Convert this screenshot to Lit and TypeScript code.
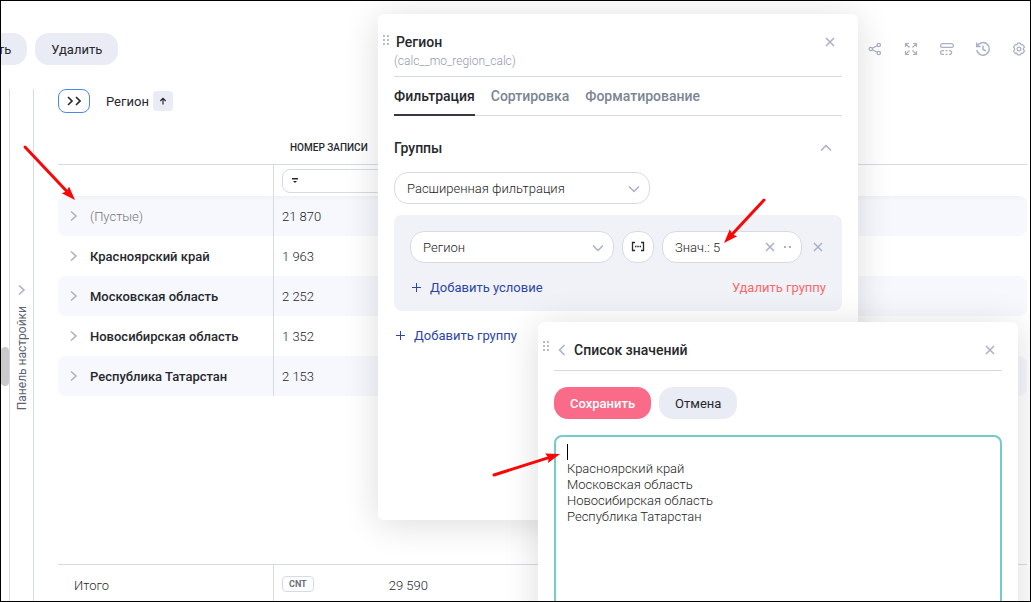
import { LitElement, html, css, svg } from "lit";
import { customElement } from "lit/decorators.js";

const icons = {
  close: html`<svg width="10" height="10" viewBox="0 0 10 10" fill="none" stroke="currentColor" stroke-width="1.5" aria-hidden="true"><path d="M1 1l8 8M9 1l-8 8" /></svg>`,
  right: html`<svg width="8" height="12" viewBox="0 0 8 12" fill="none" stroke="currentColor" stroke-width="1.5" aria-hidden="true"><path d="M1 1.5L6 6l-5 4.5" /></svg>`,
  left: html`<svg width="8" height="12" viewBox="0 0 8 12" fill="none" stroke="currentColor" stroke-width="1.5" aria-hidden="true"><path d="M6.5 1L1.5 6l5 5" /></svg>`,
  down: html`<svg class="caret-down" width="12" height="8" viewBox="0 0 12 8" fill="none" stroke="currentColor" stroke-width="1.5" aria-hidden="true"><path d="M1 1.5l5 5 5-5" /></svg>`,
  up: html`<svg width="12" height="8" viewBox="0 0 12 8" fill="none" stroke="currentColor" stroke-width="1.5" aria-hidden="true"><path d="M1 6.5l5-5 5 5" /></svg>`,
  plus: html`<svg width="10" height="10" viewBox="0 0 10 10" fill="none" stroke="currentColor" aria-hidden="true"><path d="M4.5 0v9M0 4.5h9" /></svg>`,
  grip: html`<svg class="grip" width="8" height="10" viewBox="0 0 8 10" fill="currentColor" aria-hidden="true"><path d="M0 0h2v2H0zM0 4h2v2H0zM0 8h2v2H0zM4 0h2v2H4zM4 4h2v2H4zM4 8h2v2H4z" /></svg>`,
  share: html`<svg width="14" height="14" viewBox="0 0 14 14" fill="none" stroke="currentColor" stroke-width="1.2" aria-hidden="true"><circle cx="2.8" cy="7" r="1.7" /><circle cx="10.8" cy="3" r="1.7" /><circle cx="10.8" cy="11" r="1.7" /><path d="M4.4 6.2l4.8-2.4M4.4 7.8l4.8 2.4" /></svg>`,
  expand: html`<svg width="14" height="14" viewBox="0 0 14 14" fill="none" stroke="currentColor" stroke-width="1.2" aria-hidden="true"><path d="M1.5 5V1.5H5M1.5 1.5l4 4M9 1.5h3.5V5M12.5 1.5l-4 4M1.5 9v3.5H5M1.5 12.5l4-4M9 12.5h3.5V9M12.5 12.5l-4-4" /></svg>`,
  rows: html`<svg width="14" height="14" viewBox="0 0 14 14" fill="none" stroke="currentColor" stroke-width="1.2" aria-hidden="true"><rect x=".6" y="1.6" width="12.8" height="3.8" rx="1.9" /><path d="M4 8.6H2.5a1.9 1.9 0 0 0 0 3.8H4M5.500 8.6h2M5.5 12.4h2M9 8.6h.8a1.9 1.9 0 0 1 0 3.8H9" /></svg>`,
  history: html`<svg width="16" height="16" viewBox="0 0 16 16" fill="none" stroke="currentColor" stroke-width="1.5" aria-hidden="true"><path d="M2.300 5.200A6.300 6.300 0 1 1 1.800 9M1.700 1.500v4h4M8 4.500V8.500l2.800 1.300" /></svg>`,
  gear: html`<svg width="14" height="14" viewBox="0 0 14 14" fill="none" stroke="currentColor" stroke-width="1.2" stroke-linejoin="round" aria-hidden="true"><circle cx="7" cy="7" r="1.9" /><path d="M5.500 1.200h3l.5 1.700 1.700-.4 1.800 2.600L11.400 6.300v1.400l1.100 1.200-1.800 2.600-1.700-.4-.5 1.700h-3L5 11.100l-1.700.4-1.800-2.600 1.100-1.200V6.300L1.500 5.100l1.800-2.600 1.700.4z" /></svg>`,
};

const regions = [
  { name: "(Пустые)", count: "21 870", empty: true },
  { name: "Красноярский край", count: "1 963", empty: false },
  { name: "Московская область", count: "2 252", empty: false },
  { name: "Новосибирская область", count: "1 352", empty: false },
  { name: "Республика Татарстан", count: "2 153", empty: false },
];

const base = css`
  * {
    box-sizing: border-box;
  }
  svg {
    display: block;
    flex: none;
  }
  button,
  input,
  select,
  textarea {
    margin: 0;
    font: inherit;
    color: inherit;
  }
  button {
    display: inline-flex;
    align-items: center;
    justify-content: center;
    padding: 0;
    border: 0;
    background: none;
    white-space: nowrap;
  }
  .icon {
    flex: none;
    width: 20px;
    height: 20px;
    color: #aaafc6;
  }
  .pill {
    height: 32px;
    padding: 2px 16px 0;
    border-radius: 14px;
    background: #e9ecf4;
    color: #26282d;
  }
`;

const panel = css`
  :host {
    display: block;
    background: #fff;
    border-radius: 6px;
    box-shadow: 0 4px 36px rgba(0, 0, 0, 0.14);
    padding: 16px;
  }
  .head {
    display: flex;
    align-items: center;
    position: relative;
  }
  .title {
    margin: 0;
    flex: 1;
    font-size: 14px;
    font-weight: 500;
    line-height: 20px;
    color: #26282d;
  }
  .grip {
    position: absolute;
    left: -11px;
    top: 5px;
    color: #b8bccd;
  }
`;

@customElement("filter-panel")
class FilterPanel extends LitElement {
  static styles = [
    base,
    panel,
    css`
      .head {
        padding: 2px 2px 0;
      }
      .code {
        margin: 0;
        padding-bottom: 6px;
        font-size: 12px;
        font-weight: 300;
        line-height: 18px;
        color: #9398b2;
        border-bottom: 1px solid #d5dbe5;
      }
      .tabs {
        display: flex;
        gap: 16px;
        height: 39px;
        border-bottom: 1px solid #d5dbe5;
      }
      .tab {
        height: 39px;
        border-bottom: 2px solid transparent;
        font-size: 14px;
        font-weight: 500;
        color: #7b8595;
      }
      .tab.on {
        color: #26282d;
        border-color: #363843;
      }
      .section {
        display: flex;
        align-items: center;
        justify-content: space-between;
        padding: 22px 6px 14px 0;
      }
      .section h3 {
        margin: 0;
        font-size: 14px;
        font-weight: 500;
        line-height: 20px;
        color: #26282d;
      }
      .pick {
        position: relative;
        display: block;
      }
      .pick select,
      .box {
        width: 100%;
        height: 32px;
        border: 1px solid #d5dbe5;
        border-radius: 14px;
        background: #fff;
        font-weight: 300;
        color: #1c1d21;
      }
      .pick select {
        appearance: none;
        padding: 2px 32px 0 12px;
      }
      .caret-down {
        position: absolute;
        right: 10px;
        top: 13px;
        color: #aaafc6;
        pointer-events: none;
      }
      .mode {
        width: 256px;
      }
      .group {
        margin: 11px 0 15px;
        padding: 16px 16px 13px;
        border-radius: 8px;
        background: #f1f2f7;
      }
      .rule {
        display: flex;
        align-items: center;
        gap: 8px;
        margin-bottom: 15px;
      }
      .rule .pick {
        flex: 1;
      }
      .rule > .icon {
        width: 16px;
      }
      .op {
        flex: none;
        width: 32px;
      }
      .value {
        flex: none;
        display: flex;
        align-items: center;
        width: 140px;
        padding: 0 6px 0 12px;
      }
      .value input {
        flex: 1;
        min-width: 0;
        padding: 2px 0 0;
        border: 0;
        outline: 0;
        background: none;
      }
      .value .icon {
        width: 17px;
      }
      .actions {
        display: flex;
        justify-content: space-between;
      }
      .link {
        gap: 8px;
        height: 20px;
        padding-left: 2px;
        color: #2d46a6;
      }
      .link.danger {
        color: #f7696c;
      }
    `,
  ];

  render() {
    return html`
      <header class="head">
        ${icons.grip}
        <h2 class="title">Регион</h2>
        <button class="icon" aria-label="Закрыть">${icons.close}</button>
      </header>
      <p class="code">(calc__mo_region_calc)</p>
      <nav class="tabs" role="tablist">
        <button class="tab on" role="tab" aria-selected="true">Фильтрация</button>
        <button class="tab" role="tab">Сортировка</button>
        <button class="tab" role="tab">Форматирование</button>
      </nav>
      <div class="section">
        <h3>Группы</h3>
        <button class="icon" aria-label="Свернуть">${icons.up}</button>
      </div>
      <div class="pick mode">
        <select aria-label="Режим"><option>Расширенная фильтрация</option></select>
        ${icons.down}
      </div>
      <section class="group">
        <div class="rule">
          <div class="pick">
            <select aria-label="Поле"><option>Регион</option></select>
            ${icons.down}
          </div>
          <button class="box op" aria-label="Условие">
            <svg width="14" height="12" viewBox="0 0 14 12" fill="none" stroke="#26282d" stroke-width="1.3" aria-hidden="true">
              <path d="M4 1.5H1.5v8H4M10 1.5h2.5v8H10M4 5.5h1.5M6.3 5.5h1.5M8.6 5.5h1.5" />
            </svg>
          </button>
          <div class="box value">
            <input aria-label="Значение" .value=${"Знач.: 5"} readonly />
            <button class="icon" aria-label="Очистить">${icons.close}</button>
            <button class="icon" aria-label="Ещё">
              <svg width="8" height="2" viewBox="0 0 8 2" fill="currentColor" aria-hidden="true"><path d="M1 0h2v2H1zM6 0h2v2H6z" /></svg>
            </button>
          </div>
          <button class="icon" aria-label="Удалить условие">${icons.close}</button>
        </div>
        <div class="actions">
          <button class="link">${icons.plus}Добавить условие</button>
          <button class="link danger">Удалить группу</button>
        </div>
      </section>
      <button class="link">${icons.plus}Добавить группу</button>
    `;
  }
}

@customElement("values-panel")
class ValuesPanel extends LitElement {
  static styles = [
    base,
    panel,
    css`
      :host {
        display: flex;
        flex-direction: column;
      }
      .head {
        gap: 8px;
        padding: 2px 2px 10px 4px;
        border-bottom: 1px solid #d5dbe5;
      }
      .grip {
        top: 3px;
      }
      .back {
        color: #aaafc6;
      }
      .buttons {
        display: flex;
        gap: 8px;
        padding: 16px 0;
      }
      .primary {
        background: #f96b88;
        color: #fff;
        font-weight: 500;
      }
      .list {
        position: relative;
        flex: 1;
        display: flex;
      }
      textarea {
        flex: 1;
        padding: 8px 11px;
        border: 2px solid #72cdc6;
        border-radius: 8px;
        outline: 0;
        resize: none;
        font-weight: 300;
        line-height: 16px;
        color: #1c1d21;
      }
      .cursor {
        position: absolute;
        left: 13px;
        top: 9px;
        width: 1px;
        height: 16px;
        background: #000;
      }
    `,
  ];

  render() {
    const text = regions.map((r) => (r.empty ? "" : r.name)).join("\n");
    return html`
      <header class="head">
        ${icons.grip}
        <button class="back" aria-label="Назад">${icons.left}</button>
        <h2 class="title">Список значений</h2>
        <button class="icon" aria-label="Закрыть">${icons.close}</button>
      </header>
      <div class="buttons">
        <button class="pill primary">Сохранить</button>
        <button class="pill">Отмена</button>
      </div>
      <div class="list">
        <textarea aria-label="Список значений" .value=${text}></textarea>
        <span class="cursor"></span>
      </div>
    `;
  }
}

const arrow = (x1: number, y1: number, x2: number, y2: number) => {
  const angle = (Math.atan2(y2 - y1, x2 - x1) * 180) / Math.PI;
  const length = Math.hypot(x2 - x1, y2 - y1);
  return svg`<g transform="translate(${x2} ${y2}) rotate(${angle})">
    <path d="M${-length} 0H-11" stroke="#fb0606" stroke-width="3" stroke-linecap="round" />
    <path d="M0 0L-14 -5L-12 0L-14 5z" fill="#fb0606" />
  </g>`;
};

@customElement("app-root")
class AppRoot extends LitElement {
  static styles = [
    base,
    css`
      :host {
        position: relative;
        box-sizing: border-box;
        display: flex;
        flex-direction: column;
        height: 100vh;
        overflow: hidden;
        border: 1px solid #000;
        background: #fff;
        font-family: Roboto, "Liberation Sans", sans-serif;
        font-size: 13px;
        line-height: 20px;
        color: #26282d;
      }
      .toolbar {
        display: flex;
        align-items: center;
        gap: 8px;
        padding: 32px 1px 24px 0;
      }
      .cut {
        margin-left: -3px;
        padding-left: 0;
        border-top-left-radius: 0;
        border-bottom-left-radius: 0;
      }
      .tools {
        display: flex;
        gap: 16px;
        margin-left: auto;
      }
      .work {
        flex: 1;
        min-height: 0;
        display: flex;
      }
      .scroll {
        flex: none;
        display: flex;
        align-items: center;
        width: 8px;
        padding-top: 43px;
      }
      .thumb {
        width: 8px;
        height: 39px;
        border-radius: 4px;
        background: #cbc9cb;
      }
      .rail {
        flex: none;
        width: 25px;
        flex-direction: column;
        gap: 10px;
        padding-top: 4px;
        border: solid #d5dbe5;
        border-width: 0 1px;
        font-size: 12px;
        color: #5c6272;
      }
      .rail svg {
        color: #aaafc6;
      }
      .rail span {
        writing-mode: vertical-rl;
        transform: rotate(180deg);
      }
      .main {
        flex: 1;
        min-width: 0;
        display: flex;
        flex-direction: column;
        padding: 0 3px 0 24px;
      }
      .levels {
        display: flex;
        align-items: center;
        gap: 16px;
        height: 24px;
      }
      .open {
        width: 32px;
        height: 24px;
        border: 1px solid #4a8ae6;
        border-radius: 8px;
        color: #26282d;
      }
      .level {
        display: flex;
        align-items: center;
        gap: 4px;
      }
      .level span {
        padding-top: 2px;
      }
      .sort {
        width: 20px;
        height: 20px;
        border-radius: 4px;
        background: #e9ecf4;
      }
      table {
        width: 100%;
        table-layout: fixed;
        border-collapse: separate;
        border-spacing: 0;
      }
      .c1 {
        width: 216px;
      }
      .c2 {
        width: 162px;
      }
      th,
      td {
        padding: 0 8px;
        text-align: left;
        font-weight: 300;
      }
      .names th {
        height: 52px;
        padding: 18px 16px 0;
        border-bottom: 1px solid #d5dbe5;
        font-size: 10px;
        font-weight: 500;
      }
      .filters td {
        height: 31px;
      }
      .filters td:first-child,
      .data th,
      .total th {
        border-right: 1px solid #d5dbe5;
      }
      .search {
        display: flex;
        align-items: center;
        height: 24px;
        padding: 0 9px;
        border: 1px solid #d5dbe5;
        border-radius: 8px;
      }
      .search input {
        flex: 1;
        min-width: 0;
        border: 0;
        padding: 0 8px;
        background: none;
      }
      .data th,
      .data td {
        height: 40px;
      }
      .data td,
      .row span {
        padding-top: 2px;
      }
      .data tr:nth-child(odd) > * {
        background: #f7f8fd;
      }
      .data tr:first-child > * {
        background: linear-gradient(#f1f2f5, #f7f8fd 5px);
      }
      .data th {
        border-radius: 8px 0 0 8px;
      }
      .data td:last-child {
        border-radius: 0 8px 8px 0;
      }
      .row {
        display: flex;
        align-items: center;
        gap: 12px;
        padding-left: 4px;
        font-weight: 500;
      }
      .row svg {
        color: #aaafc6;
      }
      .row.empty {
        font-weight: 300;
        color: #737479;
      }
      .total {
        margin-top: auto;
      }
      .total th,
      .total td {
        height: 37px;
        padding-top: 6px;
        border-top: 1px solid #d5dbe5;
      }
      .total th {
        padding-left: 16px;
      }
      .sum {
        display: flex;
        align-items: center;
        justify-content: space-between;
      }
      .badge {
        margin-bottom: 4px;
        padding: 0 6px;
        border: 1px solid #d5dbe5;
        border-radius: 4px;
        font-size: 9px;
        font-weight: 700;
        line-height: 14px;
        color: #6a7080;
      }
      filter-panel {
        position: absolute;
        left: 377px;
        top: 13px;
        width: 480px;
        height: 506px;
      }
      values-panel {
        position: absolute;
        left: 537px;
        top: 321px;
        width: 480px;
        height: 320px;
      }
      .marks {
        position: absolute;
        inset: 0;
        width: 100%;
        height: 100%;
        pointer-events: none;
      }
    `,
  ];

  render() {
    const columns = html`<colgroup><col class="c1" /><col class="c2" /><col /></colgroup>`;
    return html`
      <div class="toolbar">
        <button class="pill cut">ть</button>
        <button class="pill">Удалить</button>
        <div class="tools">
          <button class="icon" aria-label="Поделиться">${icons.share}</button>
          <button class="icon" aria-label="На весь экран">${icons.expand}</button>
          <button class="icon" aria-label="Строки">${icons.rows}</button>
          <button class="icon" aria-label="История">${icons.history}</button>
          <button class="icon" aria-label="Настройки">${icons.gear}</button>
        </div>
      </div>
      <div class="work">
        <div class="scroll"><div class="thumb"></div></div>
        <button class="rail">${icons.right}<span>Панель настройки</span></button>
        <main class="main">
          <div class="levels">
            <button class="open" aria-label="Развернуть">
              <svg width="14" height="10" viewBox="0 0 14 10" fill="none" stroke="currentColor" stroke-width="1.6" aria-hidden="true"><path d="M1 1l4 4-4 4M9 1l4 4-4 4" /></svg>
            </button>
            <div class="level">
              <span>Регион</span>
              <button class="sort" aria-label="По возрастанию">
                <svg width="8" height="8" viewBox="0 0 8 8" fill="none" stroke="#26282d" stroke-width="1.2" aria-hidden="true"><path d="M4 7.5V1.5M1.3 4L4 1.3 6.7 4" /></svg>
              </button>
            </div>
          </div>
          <table>
            ${columns}
            <thead>
              <tr class="names"><th></th><th>НОМЕР ЗАПИСИ</th><th></th></tr>
              <tr class="filters">
                <td></td>
                <td>
                  <div class="search">
                    <svg width="6" height="5" viewBox="0 0 6 5" fill="#26282d" aria-hidden="true"><path d="M0 0h6v1.5H0zM1 3h4L3 5z" /></svg>
                    <input aria-label="Фильтр: номер записи" />
                  </div>
                </td>
                <td></td>
              </tr>
            </thead>
            <tbody class="data">
              ${regions.map(
                (r) => html`<tr>
                  <th scope="row"><div class="row ${r.empty ? "empty" : ""}">${icons.right}<span>${r.name}</span></div></th>
                  <td>${r.count}</td>
                  <td></td>
                </tr>`
              )}
            </tbody>
          </table>
          <table class="total">
            ${columns}
            <tbody>
              <tr>
                <th scope="row">Итого</th>
                <td><div class="sum"><span class="badge">CNT</span><span>29 590</span></div></td>
                <td></td>
              </tr>
            </tbody>
          </table>
        </main>
      </div>
      <filter-panel></filter-panel>
      <values-panel></values-panel>
      <svg class="marks" fill="none" aria-hidden="true">
        ${arrow(24, 146, 74, 199)} ${arrow(763, 199, 723, 242)} ${arrow(493, 474, 559, 453)}
      </svg>
    `;
  }
}
